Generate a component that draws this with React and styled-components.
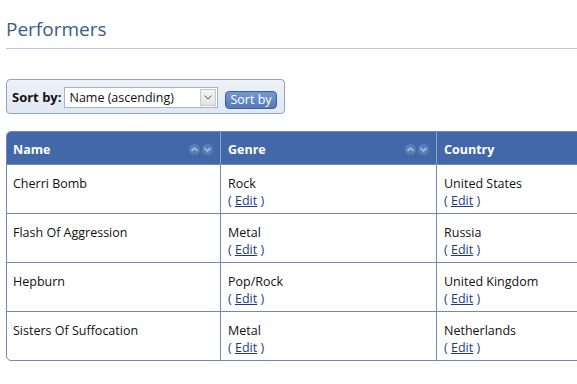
import React from "react";
import styled, { createGlobalStyle } from "styled-components";

const Global = createGlobalStyle`
  html, body { margin: 0; padding: 0; background: #fff; overflow: hidden; }
  body { font-family: "Open Sans", "Noto Sans", sans-serif; font-size: 12.5px; color: #111; }
`;

const Page = styled.div`
  padding: 16px 0 0 6px;
  width: 700px;
`;

const Title = styled.h1`
  margin: 0;
  font-weight: 400;
  font-size: 19px;
  line-height: 26px;
  color: #3c5b8c;
  padding-bottom: 6px;
  border-bottom: 1px solid #bcc7da;
`;

const SortBox = styled.div`
  margin-top: 30px;
  width: 272px;
  height: 32px;
  border: 1px solid #8fa3c7;
  border-radius: 4px;
  background: linear-gradient(#edf1f8, #e1e8f4);
  display: flex;
  align-items: center;
  padding-left: 5px;
  padding-top: 1px;
  box-sizing: content-box;
`;

const Label = styled.span`
  font-weight: 700;
  font-size: 13px;
  margin-right: 3px;
`;

const Select = styled.div`
  width: 148px;
  height: 19px;
  border: 1px solid #a9b3c3;
  background: #fff;
  display: flex;
  align-items: center;
  justify-content: space-between;
  padding-left: 4px;
  font-size: 12.5px;
`;

const Arrow = styled.div`
  width: 16px;
  height: 17px;
  margin-right: 1px;
  border: 1px solid #c5c9d0;
  background: linear-gradient(#f4f4f4, #e2e3e6);
  display: flex;
  align-items: center;
  justify-content: center;
  box-sizing: border-box;
`;

const Button = styled.div`
  margin-left: 7px;
  margin-top: 6px;
  height: 16px;
  padding: 0 4px;
  border: 1px solid #3e5f9c;
  border-radius: 4px;
  background: linear-gradient(#7597d0, #5779b8);
  color: #fff;
  font-size: 12.5px;
  line-height: 16px;
`;

const Table = styled.div`
  margin-top: 17px;
  width: 700px;
  border: 1px solid #7088b4;
  border-radius: 5px;
  overflow: hidden;
  display: grid;
  grid-template-columns: 213px 216px 1fr;
`;

const Head = styled.div`
  background: #4368a7;
  color: #fff;
  font-weight: 700;
  display: flex;
  align-items: center;
  justify-content: space-between;
  padding: 2px 7px 0 ${(p) => (p.first ? "6px" : "7px")};
  box-sizing: border-box;
  height: 33px;
  border-left: ${(p) => (p.first ? "none" : "1px solid #8aa0c8")};
  border-bottom: 1px solid #7088b4;
`;

const Arrows = styled.span`
  display: flex;
  gap: 2px;
`;

const Cell = styled.div`
  padding: 10px 0 0 ${(p) => (p.first ? "6px" : "7px")};
  box-sizing: border-box;
  border-left: ${(p) => (p.first ? "none" : "1px solid #7088b4")};
  border-top: ${(p) => (p.top ? "none" : "1px solid #7088b4")};
  line-height: 17px;
  height: ${(p) => (p.top ? "48px" : "49px")};
`;

const EditLine = styled.div`
  color: #1d3a8a;
  a {
    color: #1d3a8a;
    text-decoration: underline;
  }
`;

const Chev = ({ up }) => (
  <svg width="11" height="11" viewBox="0 0 11 11">
    <circle cx="5.5" cy="5.5" r="5.5" fill="#5a7db8" />
    <path
      d={up ? "M2.5 7 L5.5 4 L8.5 7" : "M2.5 4 L5.5 7 L8.5 4"}
      fill="none"
      stroke="#9fb6dc"
      strokeWidth="1.8"
    />
  </svg>
);

const rows = [
  ["Cherri Bomb", "Rock", "United States"],
  ["Flash Of Aggression", "Metal", "Russia"],
  ["Hepburn", "Pop/Rock", "United Kingdom"],
  ["Sisters Of Suffocation", "Metal", "Netherlands"],
];

const Edit = () => (
  <EditLine>
    ( <a>Edit</a> )
  </EditLine>
);

export default function App() {
  return (
    <Page>
      <Global />
      <Title>Performers</Title>
      <SortBox>
        <Label>Sort by:</Label>
        <Select>
          Name (ascending)
          <Arrow>
            <svg width="8" height="5" viewBox="0 0 8 5">
              <path d="M0.5 0.5 L4 4 L7.5 0.5" fill="none" stroke="#555" strokeWidth="1" />
            </svg>
          </Arrow>
        </Select>
        <Button>Sort by</Button>
      </SortBox>
      <Table>
        <Head first>
          Name
          <Arrows>
            <Chev up />
            <Chev />
          </Arrows>
        </Head>
        <Head>
          Genre
          <Arrows>
            <Chev up />
            <Chev />
          </Arrows>
        </Head>
        <Head>Country</Head>
        {rows.map((r, i) => (
          <React.Fragment key={i}>
            <Cell first top={i === 0}>{r[0]}</Cell>
            <Cell top={i === 0}>
              {r[1]}
              <Edit />
            </Cell>
            <Cell top={i === 0}>
              {r[2]}
              <Edit />
            </Cell>
          </React.Fragment>
        ))}
      </Table>
    </Page>
  );
}
